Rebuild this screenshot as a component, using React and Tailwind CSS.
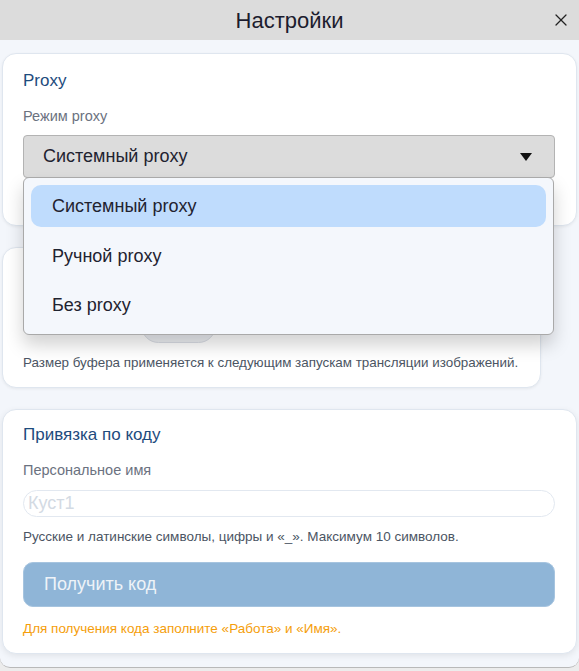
import { X } from "lucide-react";

const font = { fontFamily: '"Liberation Sans", Arial, sans-serif' };

export default function App() {
  return (
    <div className="w-[579px] h-[671px] bg-[#ececec]" style={font}>
      <div className="h-[668px] bg-[#f3f6fb] rounded-b-[10px] border-b border-[#b9b9b9] flex flex-col overflow-hidden">
        {/* title bar */}
        <div className="h-[40px] bg-[#dcdcdc] relative flex items-center justify-center shrink-0">
          <h1 className="text-[22px] text-[#1c1c2e]">Настройки</h1>
          <button className="absolute right-[8px] top-[10px] text-[#222]">
            <X size={20} strokeWidth={1.5} />
          </button>
        </div>

        <div className="flex flex-col gap-[21px] px-[2px] pt-[13px]">
          {/* Proxy card */}
          <section className="relative z-10 w-[575px] h-[173px] bg-white rounded-[14px] border border-[#dfe6ef] shadow-[0_1px_3px_rgba(0,0,0,0.06)] px-[20px] pt-[17px]">
            <h2 className="text-[17px] leading-[20px] text-[#1e4b7d]">Proxy</h2>
            <p className="mt-[16px] text-[14.5px] leading-[18px] text-[#6b7280]">Режим proxy</p>
            <div className="relative mt-[10px] w-[532px]">
              <div className="h-[43px] bg-[#dcdcdc] border border-[#b3b3b3] rounded-[4px] flex items-center justify-between pl-[19px] pr-[22px]">
                <span className="text-[18px] text-[#1f2330]">Системный proxy</span>
                <span className="w-0 h-0 border-l-[6px] border-r-[6px] border-t-[8px] border-l-transparent border-r-transparent border-t-[#111]" />
              </div>
              {/* open menu */}
              <div className="absolute left-0 top-[42px] w-[531px] bg-[#f4f7fc] border border-[#a9a9a9] rounded-[6px] shadow-[0_10px_18px_rgba(0,0,0,0.18)] p-[7px] flex flex-col">
                <div className="h-[42px] rounded-[10px] bg-[#bfdcfd] flex items-center pl-[21px] text-[18px] text-[#1f2330]">
                  Системный proxy
                </div>
                <div className="h-[50px] flex items-center pl-[21px] text-[18px] text-[#1f2330] pt-[8px]">
                  Ручной proxy
                </div>
                <div className="h-[50px] flex items-center pl-[21px] text-[18px] text-[#1f2330] pt-[6px]">
                  Без proxy
                </div>
              </div>
            </div>
          </section>

          {/* buffer card */}
          <section className="w-[539px] h-[141px] bg-white rounded-[14px] border border-[#dfe6ef] shadow-[0_1px_3px_rgba(0,0,0,0.06)] pl-[20px] pr-[10px] pt-[17px] flex flex-col">
            <h2 className="text-[17px] leading-[20px] text-[#1e4b7d]">Буфер</h2>
            <div className="mt-[23px] flex items-center gap-[8px]">
              <span className="w-[110px] text-[14.5px] text-[#6b7280]">Размер буфера</span>
              <div className="w-[75px] h-[35px] rounded-full bg-[#eceef2] border border-[#d9dde4]" />
            </div>
            <p className="mt-[11px] whitespace-nowrap text-[13.4px] leading-[18px] text-[#4b5563]">
              Размер буфера применяется к следующим запускам трансляции изображений.
            </p>
          </section>

          {/* code binding card */}
          <section className="w-[575px] h-[245px] bg-white rounded-[14px] border border-[#dfe6ef] shadow-[0_2px_6px_rgba(0,0,0,0.08)] px-[20px] pt-[15px]">
            <h2 className="text-[17px] leading-[20px] text-[#1e4b7d]">Привязка по коду</h2>
            <p className="mt-[16px] text-[14.5px] leading-[18px] text-[#6b7280]">Персональное имя</p>
            <input
              className="mt-[11px] w-[532px] h-[27px] rounded-full border border-[#e2e8f0] px-[4px] text-[18px] outline-none placeholder:text-[#d3dae3]"
              placeholder="Куст1"
            />
            <p className="mt-[11px] text-[13.5px] leading-[18px] text-[#4b5563]">
              Русские и латинские символы, цифры и «_». Максимум 10 символов.
            </p>
            <button className="mt-[16px] w-[532px] h-[45px] rounded-[10px] bg-[#8fb5d7] border border-[#a6c4df] text-left pl-[20px] text-[18px] text-[#eef3f8]">
              Получить код
            </button>
            <p className="mt-[13px] text-[13.5px] leading-[18px] text-[#f59e0b]">
              Для получения кода заполните «Работа» и «Имя».
            </p>
          </section>
        </div>
      </div>
    </div>
  );
}
